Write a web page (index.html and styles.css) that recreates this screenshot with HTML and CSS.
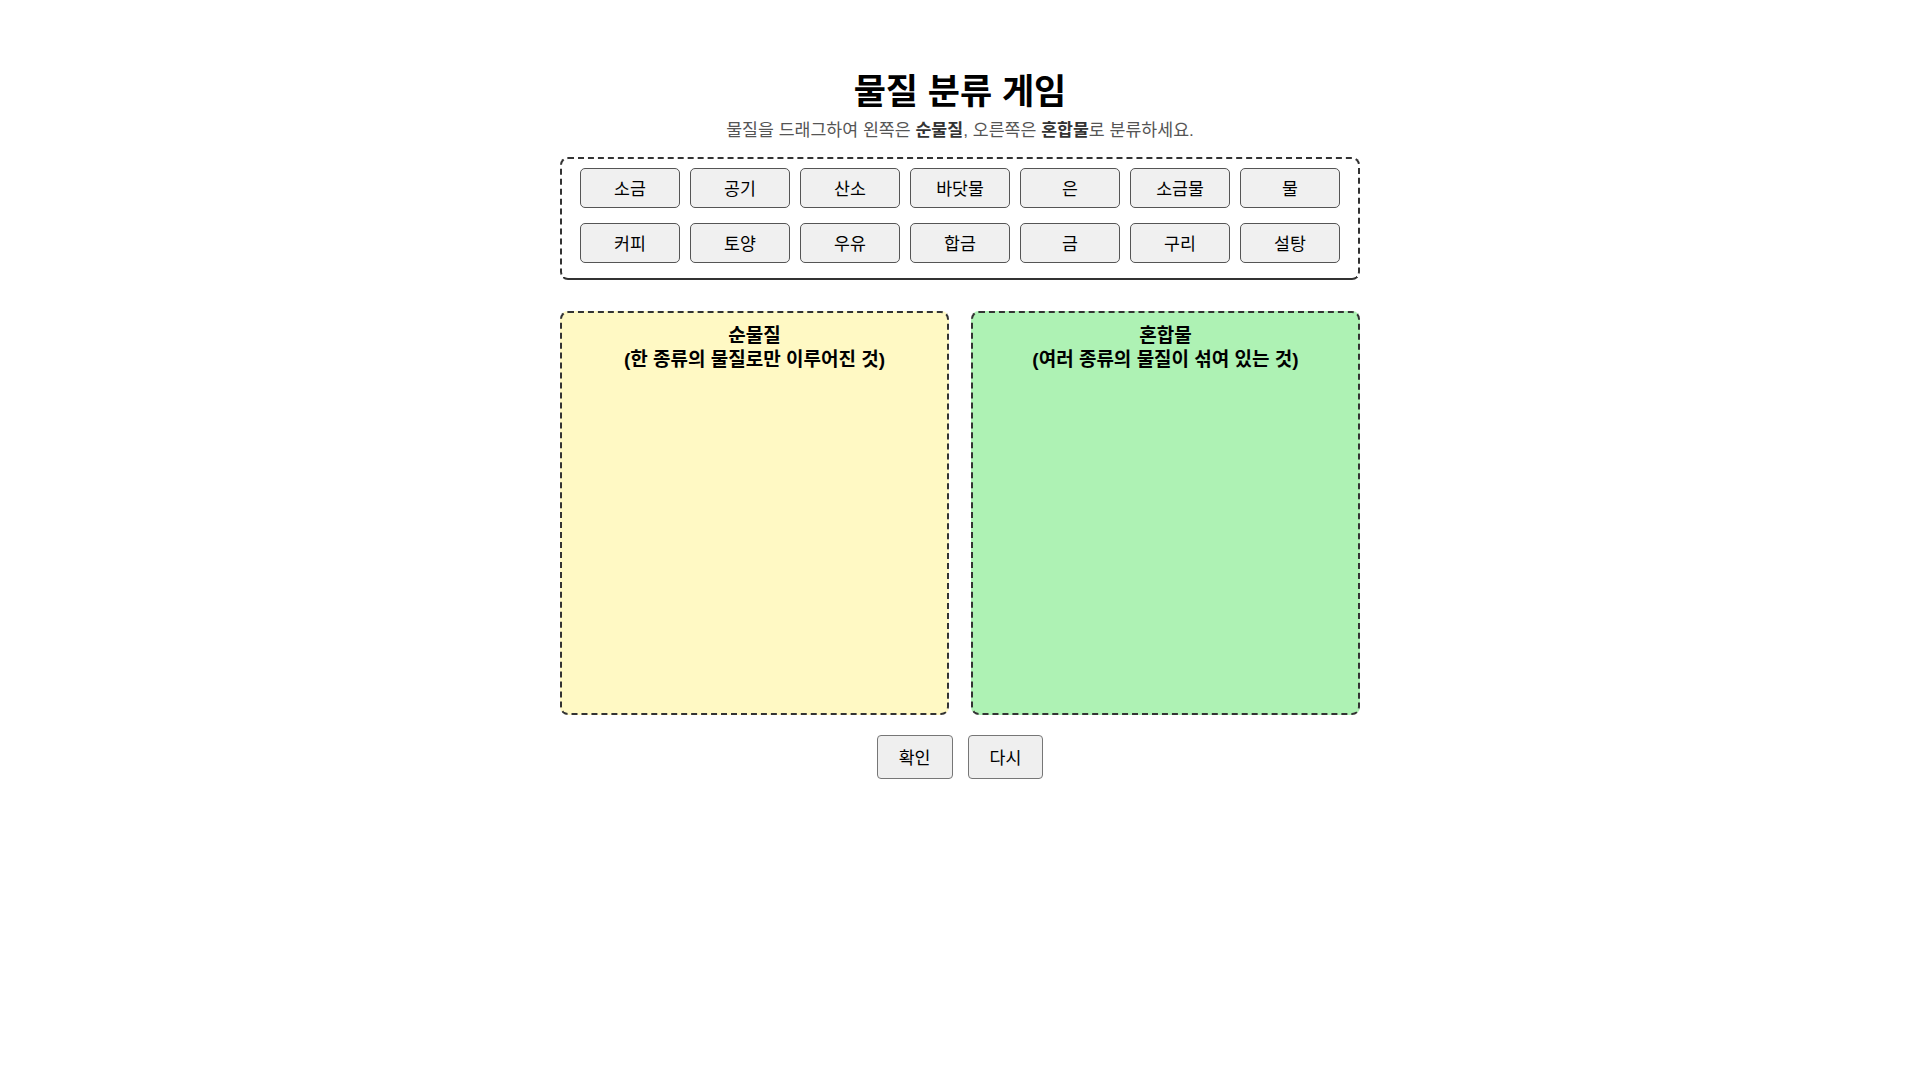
FILE: index.html
```html
<!DOCTYPE html>
<html lang="ko">
<head>
<meta charset="utf-8">
<title>물질 분류 게임</title>
<link rel="stylesheet" href="styles.css">
</head>
<body>
<div class="page">
  <h1 class="title">물질 분류 게임</h1>
  <p class="subtitle">물질을 드래그하여 왼쪽은 <b>순물질</b>, 오른쪽은 <b>혼합물</b>로 분류하세요.</p>
  <div class="items">
    <div class="row">
      <div class="item">소금</div>
      <div class="item">공기</div>
      <div class="item">산소</div>
      <div class="item">바닷물</div>
      <div class="item">은</div>
      <div class="item">소금물</div>
      <div class="item">물</div>
    </div>
    <div class="row">
      <div class="item">커피</div>
      <div class="item">토양</div>
      <div class="item">우유</div>
      <div class="item">합금</div>
      <div class="item">금</div>
      <div class="item">구리</div>
      <div class="item">설탕</div>
    </div>
  </div>
  <div class="zones">
    <div class="zone zone-pure">
      <div class="zone-title">순물질<br>(한 종류의 물질로만 이루어진 것)</div>
    </div>
    <div class="zone zone-mix">
      <div class="zone-title">혼합물<br>(여러 종류의 물질이 섞여 있는 것)</div>
    </div>
  </div>
  <div class="actions">
    <button class="action">확인</button>
    <button class="action">다시</button>
  </div>
</div>
</body>
</html>
```

FILE: styles.css
```css
html, body {
  margin: 0;
  padding: 0;
  background: #ffffff;
}

body {
  font-family: "Liberation Sans", "Noto Sans CJK KR", sans-serif;
  color: #000;
}

.page {
  width: 800px;
  margin: 0 auto;
}

.title {
  margin: 72px 0 0;
  font-size: 35px;
  line-height: 40px;
  font-weight: bold;
  text-align: center;
}

.subtitle {
  margin: 7px 0 0;
  font-size: 17.3px;
  line-height: 22px;
  color: #555555;
  text-align: center;
}

.subtitle b {
  color: #333333;
}

.items {
  margin-top: 16px;
  border: 2px dashed #333333;
  border-bottom: 2px solid #333333;
  border-radius: 8px;
  padding: 9px 0 15px;
  display: flex;
  flex-direction: column;
  gap: 15px;
}

.row {
  display: flex;
  justify-content: center;
  gap: 10px;
}

.item {
  box-sizing: border-box;
  width: 100px;
  height: 40px;
  padding-bottom: 2px;
  border: 1px solid #555555;
  border-radius: 5px;
  background: #f0f0f0;
  font-size: 17.3px;
  display: flex;
  align-items: center;
  justify-content: center;
}

.zones {
  margin-top: 31px;
  display: flex;
  gap: 22px;
}

.zone {
  box-sizing: border-box;
  flex: 1;
  height: 404px;
  border: 2px dashed #333333;
  border-radius: 8px;
  padding: 11px 10px;
}

.zone-pure {
  background: #fff9c4;
}

.zone-mix {
  background: #aef2b4;
}

.zone-title {
  font-size: 19px;
  line-height: 24px;
  font-weight: bold;
  text-align: center;
}

.actions {
  margin-top: 20px;
  display: flex;
  justify-content: center;
  gap: 15px;
}

.action {
  box-sizing: border-box;
  height: 44px;
  padding: 0 21px 2px;
  font-family: "Liberation Sans", "Noto Sans CJK KR", sans-serif;
  font-size: 17.3px;
  color: #000;
  background: #efefef;
  border: 1px solid #767676;
  border-radius: 4px;
}
```
